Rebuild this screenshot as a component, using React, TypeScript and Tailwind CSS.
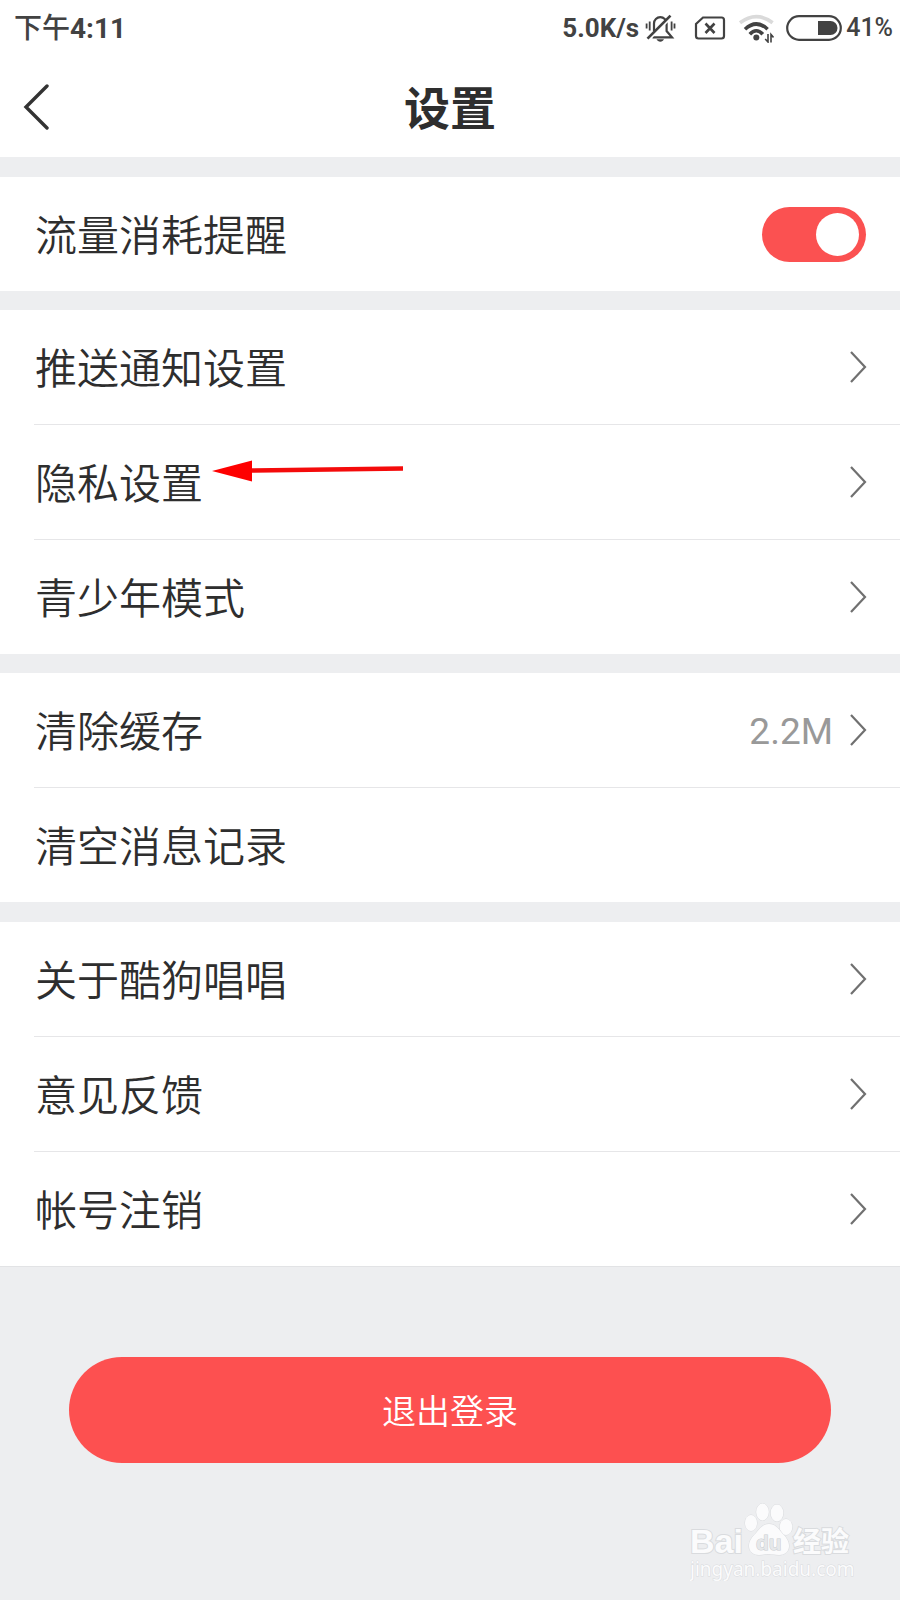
import { useState, type ReactNode } from "react";

type Item = { label: string; value?: string; arrow?: boolean; marked?: boolean };

const groups: { items: Item[]; gap: string }[] = [
  {
    gap: "mt-[19px]",
    items: [
      { label: "推送通知设置", arrow: true },
      { label: "隐私设置", arrow: true, marked: true },
      { label: "青少年模式", arrow: true },
    ],
  },
  {
    gap: "mt-[19px]",
    items: [{ label: "清除缓存", value: "2.2M", arrow: true }, { label: "清空消息记录" }],
  },
  {
    gap: "mt-5",
    items: [
      { label: "关于酷狗唱唱", arrow: true },
      { label: "意见反馈", arrow: true },
      { label: "帐号注销", arrow: true },
    ],
  },
];

function MutedBell() {
  return (
    <svg width="31" height="30" viewBox="0 0 31 30" fill="none" stroke="#424242" strokeWidth="2.200" aria-hidden="true">
      <path d="M9 18v-7.500a6.300 6.300 0 0 1 12.600 0V18l5.400 6.300H7.500" />
      <path d="M11.500 26.300h7.500c-.8 1.700-2 2.400-3.700 2.400s-3-.7-3.800-2.400Z" fill="#424242" stroke="none" />
      <path d="M5 25.500 27 3.500" stroke="#fff" strokeWidth="2.400" />
      <path d="M2.500 25.700 25.500 2.700" strokeWidth="2.600" />
      <path d="M4.700 8.500v9M1.600 10.500v5M26.600 8.500v9M29.500 10.500v5" strokeWidth="1.800" />
    </svg>
  );
}

function NoSim() {
  return (
    <svg width="32" height="24" viewBox="0 0 32 24" fill="none" stroke="#424242" strokeWidth="2.200" aria-hidden="true">
      <path d="M9 1.500h18.500a2.500 2.500 0 0 1 2.500 2.500v16a2.500 2.500 0 0 1-2.500 2.500h-23A2.500 2.500 0 0 1 2 20V8Z" />
      <path d="m11.500 7.500 9 9.500m0-9.500-9 9.500" strokeWidth="2.600" />
    </svg>
  );
}

function Wifi() {
  return (
    <svg width="36" height="30" viewBox="0 0 36 30" fill="none" aria-hidden="true">
      <path d="M2 9.800Q18.300-2.500 34.600 9.800" stroke="#dadada" strokeWidth="3.600" />
      <path d="M7 16.200Q18.300 5.800 29.600 16.200M11.800 21.200Q18.300 14.200 24.800 21.200" stroke="#424242" strokeWidth="3.600" />
      <circle cx="18.300" cy="24.600" r="3" fill="#424242" />
      <path d="M30 21v8l-2.800-3M33 29.500v-8l2.500 3" stroke="#424242" strokeWidth="1.600" />
    </svg>
  );
}

function Battery() {
  return (
    <svg width="56" height="26" viewBox="0 0 56 26" aria-hidden="true">
      <rect x="1.200" y="1.200" width="53.600" height="23.600" rx="11.800" fill="none" stroke="#424242" strokeWidth="2.200" />
      <path d="M32 6h12.500a7 7 0 0 1 0 14H32Z" fill="#424242" />
    </svg>
  );
}

function Chevron() {
  return (
    <svg width="18" height="32" viewBox="0 0 18 32" fill="none" stroke="#707070" strokeWidth="2.200" aria-hidden="true">
      <path d="M2 1 16 16 2 31" />
    </svg>
  );
}

function Pointer() {
  return (
    <svg className="absolute -top-2 left-full ml-[9px]" width="192" height="60" viewBox="0 0 192 60" aria-hidden="true">
      <path d="M38 29.500 191 27.500" stroke="#f40b0b" strokeWidth="4.500" />
      <path d="M0 30 40 19.500V40.500Z" fill="#fe0000" />
    </svg>
  );
}

function Label({ children }: { children: ReactNode }) {
  return <span className="relative pt-1.5 text-[42px] font-[350] leading-[60px]">{children}</span>;
}

function Row({ item }: { item: Item }) {
  return (
    <li>
      <button type="button" className="flex h-[114px] w-full items-center justify-between pl-[35px] pr-[33px] text-left">
        <Label>
          {item.label}
          {item.marked && <Pointer />}
        </Label>
        {item.arrow && (
          <span className="flex items-center gap-4">
            {item.value && <span className="pt-1 text-[37px] leading-[60px] text-[#999999]">{item.value}</span>}
            <Chevron />
          </span>
        )}
      </button>
    </li>
  );
}

function Watermark() {
  return (
    <svg width="164" height="78" viewBox="0 0 164 78" role="img" aria-label="Baidu 经验" fill="#fbfbfc" stroke="#d9dbde" strokeWidth="1">
      <g fontFamily="'Liberation Sans', 'Noto Sans CJK SC', sans-serif" paintOrder="stroke">
        <text x="0" y="50" fontSize="34" fontWeight="700" strokeWidth="2">Bai</text>
        <ellipse cx="61" cy="20" rx="6" ry="8" />
        <ellipse cx="72.500" cy="9" rx="6.300" ry="8.500" />
        <ellipse cx="87" cy="10" rx="6.300" ry="8.500" />
        <ellipse cx="96" cy="24" rx="6.300" ry="8" />
        <path d="M79 21c6 0 9 4 13 9 4 4 7 8 7 13 0 6-5 9-10 9-4 0-6-1-10-1s-6 1-10 1c-5 0-10-3-10-9 0-5 3-9 7-13 4-5 7-9 13-9Z" />
        <text x="66" y="47" fontSize="21" fontWeight="700" fill="#e6e8ea" stroke="#c9ccd0">du</text>
        <text x="103" y="49" fontSize="28" fontWeight="700" strokeWidth="2">经验</text>
        <text x="0" y="73" fontSize="19" fontFamily="'Noto Sans', sans-serif">jingyan.baidu.com</text>
      </g>
    </svg>
  );
}

export default function App() {
  const [reminder, setReminder] = useState(true);
  return (
    <div className="flex min-h-screen flex-col bg-[#edeef0] font-[Roboto,'Noto_Sans_CJK_SC',sans-serif] text-[#2e2e2e]">
      <header className="bg-white">
        <div className="flex h-14 items-center justify-between pl-[14px] pr-[7px] text-[28px] leading-8 text-[#424242]">
          <span className="pt-0.5 font-medium">
            下午<span className="font-bold">4:11</span>
          </span>
          <div className="flex items-center">
            <span className="mr-1.5 text-[26px] font-bold">5.0K/s</span>
            <MutedBell />
            <span className="ml-[18px]"><NoSim /></span>
            <span className="ml-3"><Wifi /></span>
            <span className="ml-3"><Battery /></span>
            <span className="ml-1 text-[25px] font-medium">41%</span>
          </div>
        </div>
        <div className="grid h-[101px] grid-cols-[1fr_auto_1fr] items-center">
          <button type="button" aria-label="返回" className="ml-[22px] w-9">
            <svg width="28" height="46" viewBox="0 0 28 46" fill="none" stroke="#333333" strokeWidth="3.400" strokeLinecap="round" aria-hidden="true">
              <path d="M25 2 4 23 25 44" />
            </svg>
          </button>
          <h1 className="pt-1 text-[46px] font-bold leading-[64px]">设置</h1>
        </div>
      </header>

      <main>
        <label className="mt-5 flex h-[114px] items-center justify-between bg-white pl-[35px] pr-[34px]">
          <Label>流量消耗提醒</Label>
          <span className="relative flex">
            <input
              type="checkbox"
              role="switch"
              checked={reminder}
              onChange={(e) => setReminder(e.target.checked)}
              className="peer h-[55px] w-[104px] appearance-none rounded-full bg-[#cccccc] checked:bg-[#fb5151]"
            />
            <span className="pointer-events-none absolute left-[6px] top-[6px] size-[43px] rounded-full bg-white peer-checked:left-[54px]" />
          </span>
        </label>

        {groups.map((group) => (
          <section key={group.items[0].label} className={group.gap}>
            <ul className="bg-white">
              {group.items.map((item, i) => (
                <div key={item.label} className="contents">
                  {i > 0 && <li role="separator" className="ml-[34px] h-px bg-[#e6e6e8]" />}
                  <Row item={item} />
                </div>
              ))}
            </ul>
          </section>
        ))}

        <div className="border-t border-[#e2e3e5] px-[69px] pt-[90px]">
          <button type="button" className="h-[106px] w-full rounded-full bg-[#fd5050] pt-1 text-[34px] font-[350] leading-[50px] text-white">
            退出登录
          </button>
        </div>
      </main>

      <footer className="mt-10 flex justify-end pr-[46px]">
        <Watermark />
      </footer>
    </div>
  );
}
